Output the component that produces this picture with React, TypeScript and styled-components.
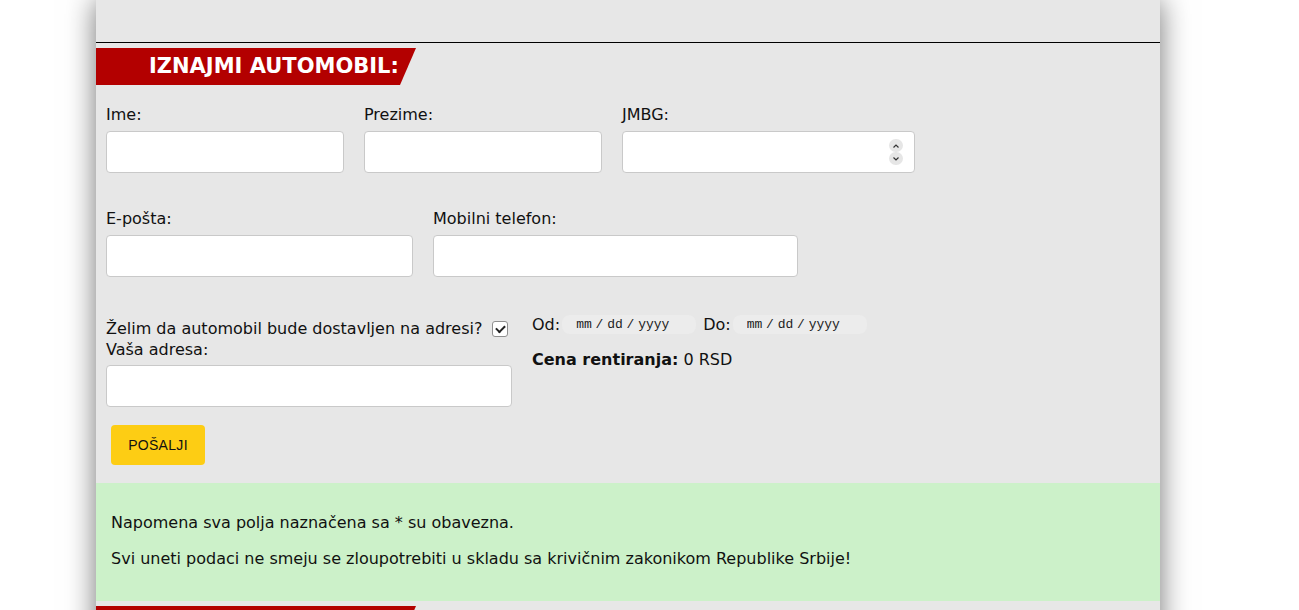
import React from "react";
import styled, { createGlobalStyle } from "styled-components";

const Global = createGlobalStyle`
  html, body { margin: 0; padding: 0; background: #fff; overflow: hidden; }
  body { font-family: "DejaVu Sans", "Open Sans", sans-serif; color: #111; }
  * { box-sizing: border-box; }
`;

const Page = styled.div`
  width: 1299px;
  height: 610px;
  overflow: hidden;
  background: #fff;
`;

const Container = styled.div`
  margin-left: 96px;
  width: 1064px;
  background: #e7e7e7;
  box-shadow: 0 0 28px rgba(0, 0, 0, 0.55);
  min-height: 700px;
`;

const TopArea = styled.div`
  height: 43px;
  border-bottom: 1px solid #000;
`;

const Banner = styled.div`
  margin-top: 5px;
  width: 320px;
  height: 37px;
  background: #b30000;
  clip-path: polygon(0 0, 100% 0, calc(100% - 16px) 100%, 0 100%);
  color: #fff;
  font-family: "DejaVu Sans", sans-serif;
  font-weight: bold;
  font-size: 21px;
  line-height: 37px;
  padding-left: 53px;
  white-space: nowrap;
`;

const Form = styled.form`
  padding: 20px 10px 18px 10px;
`;

const Row = styled.div`
  display: flex;
  gap: 20px;
  align-items: flex-start;
  margin-bottom: 36px;
`;

const Field = styled.label<{ $w: number }>`
  display: flex;
  flex-direction: column;
  width: ${(p) => p.$w}px;
  font-size: 16px;
  line-height: 20px;
`;

const InputWrap = styled.div`
  position: relative;
  margin-top: 6px;
`;

const Text = styled.input`
  display: block;
  margin-top: 6px;
  height: 42px;
  width: 100%;
  background: #fff;
  border: 1px solid #c9c9c9;
  border-radius: 4px;
  padding: 0 10px;
  font-size: 15px;
  ${InputWrap} & { margin-top: 0; }
  &::-webkit-inner-spin-button,
  &::-webkit-outer-spin-button { -webkit-appearance: none; margin: 0; }
  -moz-appearance: textfield;
`;

const Spinner = styled.div`
  position: absolute;
  right: 12px;
  top: 8px;
  display: flex;
  flex-direction: column;
  pointer-events: none;
`;

const SpinBtn = styled.span`
  width: 14px;
  height: 13px;
  border-radius: 7px;
  background: #e6e6e6;
  display: flex;
  align-items: center;
  justify-content: center;
`;

const BottomRow = styled.div`
  display: flex;
  gap: 20px;
  align-items: flex-start;
  margin-top: -2px;
`;

const LeftCol = styled.div`
  width: 406px;
  display: flex;
  flex-direction: column;
  padding-top: 7px;
  font-size: 16px;
  line-height: 21px;
`;

const CheckLine = styled.label`
  display: flex;
  align-items: center;
  justify-content: space-between;
  padding-right: 4px;
`;

const Check = styled.input`
  appearance: none;
  -webkit-appearance: none;
  width: 16px;
  height: 16px;
  margin: 0;
  border: 1px solid #8f8f8f;
  border-radius: 3px;
  background: #fff;
  display: grid;
  place-items: center;
  &:checked::after {
    content: "";
    width: 7px;
    height: 4px;
    border-left: 2px solid #222;
    border-bottom: 2px solid #222;
    transform: translateY(-1px) rotate(-45deg);
  }
`;

const AddrInput = styled(Text)`
  margin-top: 5px;
`;

const RightCol = styled.div`
  display: flex;
  flex-direction: column;
  font-size: 16px;
  padding-top: 3px;
`;

const DateLine = styled.div`
  display: flex;
  align-items: center;
  height: 20px;
`;

const DateLabel = styled.span`
  margin-right: 2px;
`;

const DateInput = styled.input`
  width: 134px;
  height: 19px;
  border: none;
  border-radius: 8px;
  background: #ececec;
  font-family: "Liberation Mono", monospace;
  font-size: 13px;
  word-spacing: -4px;
  color: #222;
  padding: 0 0 0 14px;
  margin-right: 7px;
  &::placeholder { color: #222; opacity: 1; word-spacing: -4px; }
`;

const Price = styled.div`
  margin-top: 16px;
  b { font-weight: bold; }
`;

const Submit = styled.button`
  display: block;
  margin: 18px 0 0 5px;
  width: 94px;
  height: 40px;
  background: #fdcd14;
  border: none;
  border-radius: 4px;
  font-family: "Liberation Sans", Arial, sans-serif;
  font-size: 14px;
  color: #111;
  letter-spacing: 0.3px;
`;

const Notice = styled.div`
  background: #ccf1c9;
  padding: 30px 15px 32px;
  font-size: 16px;
  line-height: 20px;
  p { margin: 0; }
  p + p { margin-top: 16px; }
`;

const Chevron = ({ up }: { up?: boolean }) => (
  <svg width="8" height="6" viewBox="0 0 8 6">
    <path
      d={up ? "M1.5 4.5 L4 2 L6.5 4.5" : "M1.5 1.5 L4 4 L6.5 1.5"}
      fill="none"
      stroke="#333"
      strokeWidth="1.2"
    />
  </svg>
);

export default function App() {
  return (
    <Page>
      <Global />
      <Container>
        <TopArea />
        <Banner>IZNAJMI AUTOMOBIL:</Banner>
        <Form onSubmit={(e) => e.preventDefault()}>
          <Row>
            <Field $w={238}>
              Ime:
              <Text type="text" />
            </Field>
            <Field $w={238}>
              Prezime:
              <Text type="text" />
            </Field>
            <Field $w={293}>
              JMBG:
              <InputWrap>
                <Text type="number" />
                <Spinner>
                  <SpinBtn>
                    <Chevron up />
                  </SpinBtn>
                  <SpinBtn>
                    <Chevron />
                  </SpinBtn>
                </Spinner>
              </InputWrap>
            </Field>
          </Row>
          <Row>
            <Field $w={307}>
              E-pošta:
              <Text type="email" />
            </Field>
            <Field $w={365}>
              Mobilni telefon:
              <Text type="tel" />
            </Field>
          </Row>
          <BottomRow>
            <LeftCol>
              <CheckLine>
                Želim da automobil bude dostavljen na adresi?
                <Check type="checkbox" defaultChecked />
              </CheckLine>
              <span>Vaša adresa:</span>
              <AddrInput type="text" />
            </LeftCol>
            <RightCol>
              <DateLine>
                <DateLabel>Od:</DateLabel>
                <DateInput type="text" placeholder="mm / dd / yyyy" />
                <DateLabel>Do:</DateLabel>
                <DateInput type="text" placeholder="mm / dd / yyyy" />
              </DateLine>
              <Price>
                <b>Cena rentiranja:</b> 0 RSD
              </Price>
            </RightCol>
          </BottomRow>
          <Submit type="submit">POŠALJI</Submit>
        </Form>
        <Notice>
          <p>Napomena sva polja naznačena sa * su obavezna.</p>
          <p>Svi uneti podaci ne smeju se zloupotrebiti u skladu sa krivičnim zakonikom Republike Srbije!</p>
        </Notice>
        <Banner />
      </Container>
    </Page>
  );
}
